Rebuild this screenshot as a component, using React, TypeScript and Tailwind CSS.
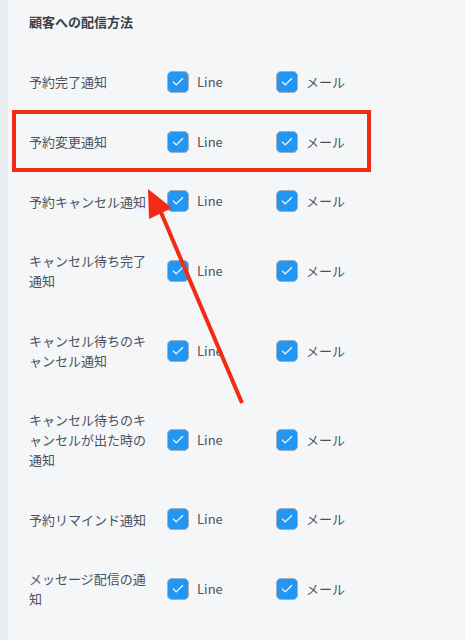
import { Check } from 'lucide-react'

type Row = { label: string }

const rows: Row[] = [
  { label: '予約完了通知' },
  { label: '予約変更通知' },
  { label: '予約キャンセル通知' },
  { label: 'キャンセル待ち完了通知' },
  { label: 'キャンセル待ちのキャンセル通知' },
  { label: 'キャンセル待ちのキャンセルが出た時の通知' },
  { label: '予約リマインド通知' },
  { label: 'メッセージ配信の通知' },
]

function CheckOption({ text }: { text: string }) {
  return (
    <label className="flex w-[109px] items-center gap-[8px]">
      <span className="flex h-[22px] w-[22px] items-center justify-center rounded-[5px] border border-[#a3adbd] bg-[#2196f3]">
        <Check size={14} strokeWidth={2} className="text-white" />
      </span>
      <span className="text-[13px] leading-[20px] text-[#4b5260]">{text}</span>
    </label>
  )
}

export default function App() {
  return (
    <div
      className="relative flex min-h-[640px] w-full bg-[#f5f6f7]"
      style={{ fontFamily: '"Noto Sans CJK JP", "Noto Sans", sans-serif' }}
    >
      {/* sidebar edge */}
      <div className="w-[8px] shrink-0 bg-[#e9ecf0]" />

      <div className="flex-1 pl-[21px]">
        <div className="h-[52px] pt-[12px] text-[13px] font-bold leading-[20px] text-[#3a3f4a]">
          顧客への配信方法
        </div>

        {rows.map(row => (
          <div key={row.label} className="flex items-center">
            <div className="w-[120px] shrink-0 py-[20px] text-[13px] leading-[19.75px] text-[#4b5260]">
              {row.label}
            </div>
            <div className="ml-[18px] flex items-center">
              <CheckOption text="Line" />
              <CheckOption text="メール" />
            </div>
          </div>
        ))}
      </div>

      {/* highlight box */}
      <div className="pointer-events-none absolute left-[12px] top-[110px] h-[62px] w-[359px] border-4 border-[#f22b16]" />

      {/* arrow */}
      <svg className="pointer-events-none absolute left-0 top-0" width="465" height="640">
        <line x1="242" y1="403" x2="160" y2="210" stroke="#f22b16" strokeWidth="4" />
        <polygon points="148,189 149,219 172,208" fill="#f22b16" />
      </svg>
    </div>
  )
}
